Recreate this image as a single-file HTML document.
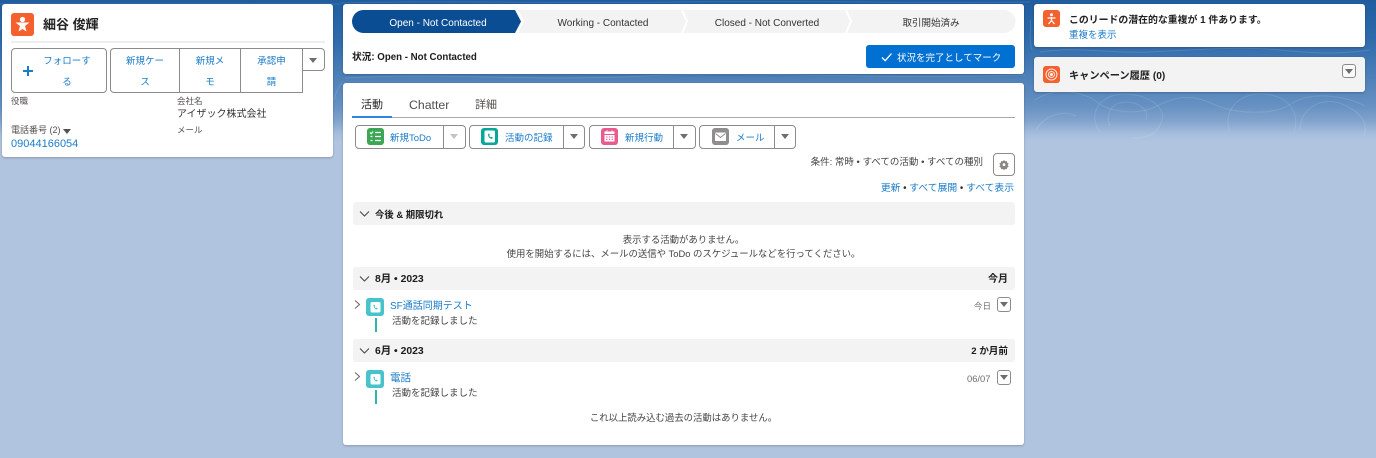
<!DOCTYPE html>
<html lang="ja"><head><meta charset="utf-8"><style>
html,body{margin:0;padding:0}
body{width:1376px;height:458px;overflow:hidden;position:relative;background:#b0c4df;font-family:"Liberation Sans","Noto Sans CJK JP",sans-serif;color:#3e3e3c;font-size:10px}
.a{position:absolute;white-space:nowrap}
.card{position:absolute;background:#fff;border-radius:3px;box-shadow:0 1px 2px rgba(0,0,0,.22)}
.l{color:#1b7cc9}
.btn{position:absolute;box-sizing:border-box;border:1px solid #8d8b89;background:#fff}
.t{position:absolute;text-align:center;line-height:22px;color:#1b7cc9;font-size:9.5px}
.tri{position:absolute;width:0;height:0;border-left:4.5px solid transparent;border-right:4.5px solid transparent;border-top:5.5px solid #706e6b}
.sec{position:absolute;left:353px;width:662px;background:#f3f3f3;border-radius:3px}
.sec b{position:absolute;left:22px;font-size:10px;color:#1c1c1c;white-space:nowrap;line-height:25px}
.ic{position:absolute;border-radius:3px}
svg{position:absolute;overflow:visible}
</style></head><body>
<div class="a" style="left:0;top:0;width:1376px;height:142px;background:linear-gradient(#1f5d9e 0,#2f6bab 40px,#6590c2 105px,#7fa2cc 120px,#a6bedd 134px,#b0c4df 142px)"></div>
<svg style="left:0;top:0" width="1376" height="140" fill="none" stroke="#fff" stroke-opacity=".12" stroke-width="1">
<path d="M1035 100c20-14 50-8 62 2s40 14 60 4 34-12 56-2 60 12 78 0 50-10 74 2"/>
<path d="M1100 132c-14-20 2-38 24-38s42 12 38 26-14 18-30 18"/>
<path d="M1110 126c-6-14 4-24 16-24s24 8 20 18"/>
<path d="M1230 132c-8-20 8-40 34-38s36 20 30 38"/>
<path d="M1300 130c0-22 22-34 42-26s26 20 22 32"/>
<path d="M1036 130c10-16 28-20 40-14"/>
<path d="M1040 52c40-6 70 2 110 0s90-6 130-2 60 4 90 0"/>
<path d="M334 100c2-10 6-14 8-18"/><path d="M0 4c60 0 90 0 340 0"/><path d="M345 78c100-6 180 4 300-2s200 4 380-1"/>
<path d="M340 3c120-3 200 1 340-1s230 2 350 0"/><path d="M1030 20c2 10-2 18 2 30"/>
</svg>

<!-- left card -->
<div class="card" style="left:2px;top:4px;width:331px;height:153px"></div>
<div class="ic" style="left:11px;top:13px;width:23px;height:23px;background:#f4612e;border-radius:3px"></div>
<svg style="left:11px;top:13px" width="23" height="23"><circle cx="11.5" cy="6.500" r="2.600" fill="#fff"/><path d="M4.500 9.500h14l-4.500 3.500 1.500 5.500-4-2.500-4 2.500 1.500-5.500z" fill="#fff"/></svg>
<div class="a" style="left:43px;top:15px;font-size:13px;line-height:20px;font-weight:bold;color:#222">細谷 俊輝</div>
<div class="a" style="left:11px;top:41px;width:314px;height:2px;background:#eeeeee"></div>
<div class="btn" style="left:11px;top:48px;width:96px;height:45px;border-radius:4px"></div>
<div class="a" style="left:23px;top:70px;width:10px;height:1.5px;background:#1b7cc9"></div>
<div class="a" style="left:27.3px;top:66px;width:1.5px;height:10px;background:#1b7cc9"></div>
<div class="t" style="left:38px;top:51px;width:58px">フォローす</div>
<div class="t" style="left:38px;top:72px;width:58px">る</div>
<div class="btn" style="left:110px;top:48px;width:193px;height:45px;border-radius:4px 0 0 4px"></div>
<div class="a" style="left:179px;top:48px;width:1px;height:45px;background:#8d8b89"></div>
<div class="a" style="left:240px;top:48px;width:1px;height:45px;background:#8d8b89"></div>
<div class="t" style="left:111px;top:51px;width:68px">新規ケー</div><div class="t" style="left:111px;top:72px;width:68px">ス</div>
<div class="t" style="left:180px;top:51px;width:60px">新規メ</div><div class="t" style="left:180px;top:72px;width:60px">モ</div>
<div class="t" style="left:241px;top:51px;width:61px">承認申</div><div class="t" style="left:241px;top:72px;width:61px">請</div>
<div class="btn" style="left:302px;top:48px;width:23px;height:23px;border-radius:0 4px 4px 0"></div><div class="tri" style="left:309px;top:58px"></div>
<div class="a" style="left:11px;top:95px;font-size:8.5px;line-height:13px;color:#54514f">役職</div>
<div class="a" style="left:177px;top:95px;font-size:8.5px;line-height:13px;color:#54514f">会社名</div>
<div class="a" style="left:177px;top:108px;font-size:10px;line-height:14px;color:#333">アイザック株式会社</div>
<div class="a" style="left:11px;top:124px;font-size:9px;line-height:13px;color:#54514f">電話番号 (2)</div><div class="tri" style="left:63px;top:129px;border-top-color:#54514f"></div>
<div class="a" style="left:177px;top:124px;font-size:8.5px;line-height:13px;color:#54514f">メール</div>
<div class="a l" style="left:11px;top:137px;font-size:11px;line-height:14px">09044166054</div>

<!-- path card -->
<div class="card" style="left:343px;top:4px;width:681px;height:70px"></div>
<svg style="left:352px;top:10px" width="663" height="23">
<path d="M11.5 0H652a11.5 11.5 0 0 1 0 23H11.5z" fill="#f3f3f3"/>
<path d="M11.5 0H163l6 11.5-6 11.5H11.5a11.5 11.5 0 0 1 0-23z" fill="#0b4d93"/>
<path d="M165 0l6 11.5-6 11.5M330 0l5 11.5-5 11.5M494 0l5 11.5-5 11.5" fill="none" stroke="#fff" stroke-width="2"/>
</svg>
<div class="a" style="left:352px;top:12px;width:172px;text-align:center;line-height:24px;color:#fff;font-size:10px">Open - Not Contacted</div>
<div class="a" style="left:517px;top:12px;width:172px;text-align:center;line-height:24px;color:#333;font-size:10px">Working - Contacted</div>
<div class="a" style="left:683px;top:12px;width:168px;text-align:center;line-height:24px;color:#333;font-size:10px">Closed - Not Converted</div>
<div class="a" style="left:847px;top:12px;width:168px;text-align:center;line-height:24px;color:#333;font-size:9.5px">取引開始済み</div>
<div class="a" style="left:352px;top:51px;line-height:14px;font-weight:bold;color:#1c1c1c;font-size:9.7px">状況: Open - Not Contacted</div>
<div class="a" style="left:866px;top:45px;width:149px;height:23px;background:#0070d2;border-radius:3px"></div>
<svg style="left:881px;top:51px" width="12" height="12"><path d="M1 6.500l3.200 3.200L10.500 2.500" fill="none" stroke="#fff" stroke-width="1.300"/></svg>
<div class="a" style="left:897px;top:47px;line-height:23px;color:#fff;font-size:9.5px">状況を完了としてマーク</div>

<!-- main card -->
<div class="card" style="left:343px;top:83px;width:681px;height:362px"></div>
<div class="a" style="left:361px;top:97px;font-size:11px;line-height:16px;color:#222">活動</div>
<div class="a" style="left:409px;top:97px;font-size:12.3px;line-height:16px;color:#514f4d">Chatter</div>
<div class="a" style="left:475px;top:97px;font-size:11px;line-height:16px;color:#514f4d">詳細</div>
<div class="a" style="left:352px;top:117px;width:663px;height:1px;background:#aaa9a7"></div>
<div class="a" style="left:352px;top:116px;width:40px;height:2px;background:#2e86de"></div>

<div class="btn" style="left:355px;top:125px;width:111px;height:24px;border-radius:4px"></div><div class="a" style="left:443px;top:125px;width:1px;height:24px;background:#8d8b89"></div>
<div class="btn" style="left:469px;top:125px;width:116px;height:24px;border-radius:4px"></div><div class="a" style="left:563px;top:125px;width:1px;height:24px;background:#8d8b89"></div>
<div class="btn" style="left:589px;top:125px;width:107px;height:24px;border-radius:4px"></div><div class="a" style="left:673px;top:125px;width:1px;height:24px;background:#8d8b89"></div>
<div class="btn" style="left:699px;top:125px;width:97px;height:24px;border-radius:4px"></div><div class="a" style="left:774px;top:125px;width:1px;height:24px;background:#8d8b89"></div>
<div class="tri" style="left:450px;top:134px;border-top-color:#c4c3c1"></div><div class="tri" style="left:570px;top:134px"></div><div class="tri" style="left:680px;top:134px"></div><div class="tri" style="left:781px;top:134px"></div>
<div class="ic" style="left:367px;top:128px;width:17px;height:17px;background:#3ba755"></div>
<svg style="left:367px;top:128px" width="17" height="17" fill="none" stroke="#fff" stroke-width="1.200"><path d="M3 4.500l1.200 1.200L6 3.500M8 4.500h6M8 8.500h6M8 12.500h6M3.500 8.500h2M3.500 12.500h2"/></svg>
<div class="a l" style="left:390px;top:127px;line-height:23px;font-size:9.5px">新規ToDo</div>
<div class="ic" style="left:481px;top:128px;width:17px;height:17px;background:#05a798"></div>
<svg style="left:481px;top:128px" width="17" height="17"><rect x="3.500" y="2.500" width="10.500" height="12" rx="1.500" fill="#fff"/><path d="M7 6c0 3 1.500 4.500 4 5l.8-1.500-1.600-.8-.6.600c-.8-.4-1.200-1-1.400-1.800l.6-.6L8 5.500z" fill="#05a798"/></svg>
<div class="a l" style="left:505px;top:127px;line-height:23px;font-size:9.5px">活動の記録</div>
<div class="ic" style="left:601px;top:128px;width:17px;height:17px;background:#eb5a8c"></div>
<svg style="left:601px;top:128px" width="17" height="17" fill="#fff"><rect x="3.500" y="3.500" width="10" height="2.500"/><path d="M5.500 2.500h1v2h-1zM10.500 2.500h1v2h-1z"/><path d="M3.500 7h10v6.500h-10zM5 8.500v1h1.500v-1zM7.800 8.500v1h1.500v-1zM10.500 8.500v1H12v-1zM5 10.800v1h1.500v-1zM7.800 10.800v1h1.500v-1zM10.500 10.800v1H12v-1z" fill-rule="evenodd"/></svg>
<div class="a l" style="left:625px;top:127px;line-height:23px;font-size:9.5px">新規行動</div>
<div class="ic" style="left:712px;top:128px;width:17px;height:17px;background:#8f8e8c"></div>
<svg style="left:712px;top:128px" width="17" height="17"><rect x="3" y="4.500" width="11" height="8.500" rx=".8" fill="#fff"/><path d="M3.500 5.500l5 4 5-4" fill="none" stroke="#8f8e8c"/></svg>
<div class="a l" style="left:736px;top:127px;line-height:23px;font-size:9.5px">メール</div>

<div class="a" style="right:393px;top:156px;line-height:14px;font-size:9.5px;color:#444">条件: 常時 • すべての活動 • すべての種別</div>
<div class="btn" style="left:993px;top:153px;width:22px;height:23px;border-radius:4px"></div>
<svg style="left:999px;top:159px" width="10" height="11"><path d="M5 .8l1 1.500 1.800-.3.400 1.700 1.500 1-1 1.400 1 1.500-1.500 1-.4 1.600-1.800-.2-1 1.400-1-1.400-1.800.2-.4-1.600-1.500-1 1-1.500-1-1.400 1.500-1 .4-1.700 1.800.3z" fill="#8a8886"/><circle cx="5" cy="5.600" r="1.400" fill="#fff"/></svg>
<div class="a" style="right:362px;top:182px;line-height:14px;font-size:9.8px;color:#333"><span class="l">更新</span> • <span class="l">すべて展開</span> • <span class="l">すべて表示</span></div>

<div class="sec" style="top:202px;height:23px"><b style="font-size:9.4px">今後 &amp; 期限切れ</b></div>
<div class="a" style="left:343px;width:681px;top:233px;text-align:center;line-height:14px;font-size:9.4px;color:#444">表示する活動がありません。<br>使用を開始するには、メールの送信や ToDo のスケジュールなどを行ってください。</div>
<div class="sec" style="top:267px;height:23px"><b style="font-size:10.4px">8月 • 2023</b><b style="left:auto;right:7px">今月</b></div>
<div class="sec" style="top:339px;height:23px"><b style="font-size:10.4px">6月 • 2023</b><b style="left:auto;right:7px;font-size:9.6px">2 か月前</b></div>
<svg style="left:360px;top:210px" width="10" height="8" fill="none" stroke="#444" stroke-width="1"><path d="M0 1.500l4.500 4.500L9 1.500"/></svg>
<svg style="left:360px;top:275px" width="10" height="8" fill="none" stroke="#444" stroke-width="1"><path d="M0 1.500l4.500 4.500L9 1.500"/></svg>
<svg style="left:360px;top:347px" width="10" height="8" fill="none" stroke="#444" stroke-width="1"><path d="M0 1.500l4.500 4.500L9 1.500"/></svg>

<svg style="left:354px;top:300px" width="8" height="10" fill="none" stroke="#666" stroke-width="1"><path d="M1 .5l4.500 4-4.500 4"/></svg>
<div class="ic" style="left:366px;top:298px;width:18px;height:18px;background:#48c3cc"></div>
<svg style="left:366px;top:298px" width="18" height="18"><rect x="4.500" y="4" width="10" height="10.500" rx="1.500" fill="#fff"/><path d="M7.500 7c0 2.500 1.300 4 3.500 4.500l.7-1.300-1.400-.7-.5.500c-.7-.3-1-.9-1.200-1.600l.5-.5-.7-1.400z" fill="#48c3cc"/></svg>
<div class="a" style="left:374.500px;top:318px;width:2px;height:14px;background:#2fb5b0"></div>
<div class="a l" style="left:390px;top:300px;line-height:14px;font-size:10px">SF通話同期テスト</div>
<div class="a" style="left:392px;top:315px;line-height:14px;font-size:9.500px;color:#444">活動を記録しました</div>
<div class="a" style="left:974px;top:299px;line-height:14px;font-size:8.500px;color:#706e6b">今日</div>
<div class="btn" style="left:997px;top:297px;width:14px;height:15px;border-radius:3px"></div><div class="tri" style="left:999.500px;top:302px"></div>

<svg style="left:354px;top:372px" width="8" height="10" fill="none" stroke="#666" stroke-width="1"><path d="M1 .5l4.500 4-4.500 4"/></svg>
<div class="ic" style="left:366px;top:370px;width:18px;height:18px;background:#48c3cc"></div>
<svg style="left:366px;top:370px" width="18" height="18"><rect x="4.500" y="4" width="10" height="10.500" rx="1.500" fill="#fff"/><path d="M7.500 7c0 2.500 1.300 4 3.500 4.500l.7-1.300-1.400-.7-.5.500c-.7-.3-1-.9-1.200-1.600l.5-.5-.7-1.400z" fill="#48c3cc"/></svg>
<div class="a" style="left:374.500px;top:390px;width:2px;height:14px;background:#2fb5b0"></div>
<div class="a l" style="left:390px;top:371px;line-height:14px;font-size:10.500px">電話</div>
<div class="a" style="left:392px;top:387px;line-height:14px;font-size:9.500px;color:#444">活動を記録しました</div>
<div class="a" style="left:967px;top:372px;line-height:14px;font-size:9.400px;color:#706e6b">06/07</div>
<div class="btn" style="left:997px;top:370px;width:14px;height:15px;border-radius:3px"></div><div class="tri" style="left:999.500px;top:375px"></div>
<div class="a" style="left:343px;width:681px;top:411px;text-align:center;line-height:14px;font-size:9.400px;color:#444">これ以上読み込む過去の活動はありません。</div>

<!-- right -->
<div class="card" style="left:1034px;top:4px;width:331px;height:43px"></div>
<div class="ic" style="left:1043px;top:10px;width:17px;height:17px;background:#f4612e"></div>
<svg style="left:1043px;top:10px" width="17" height="17" fill="none" stroke="#fff" stroke-width="1.300"><circle cx="8.500" cy="4.800" r="1.500" fill="#fff" stroke="none"/><path d="M4.500 8h8M8.500 7v3.500M8.500 10.500l-3 3.500M8.500 10.500l3 3.500"/></svg>
<div class="a" style="left:1069px;top:13px;line-height:15px;font-size:9.9px;font-weight:bold;color:#222">このリードの潜在的な重複が 1 件あります。</div>
<div class="a l" style="left:1069px;top:29px;line-height:14px;font-size:9.500px">重複を表示</div>
<div class="card" style="left:1034px;top:57px;width:331px;height:35px;background:#f3f3f3"></div>
<div class="ic" style="left:1043px;top:66px;width:17px;height:17px;background:#f4612e"></div>
<svg style="left:1043px;top:66px" width="17" height="17" fill="none" stroke="#fff" stroke-opacity=".85" stroke-width="1"><circle cx="8.500" cy="8.500" r="5.500"/><circle cx="8.500" cy="8.500" r="3"/><circle cx="8.500" cy="8.500" r="1" fill="#fff"/></svg>
<div class="a" style="left:1069px;top:69px;line-height:15px;font-size:10.200px;font-weight:bold;color:#222">キャンペーン履歴 (0)</div>
<div class="btn" style="left:1342px;top:64px;width:14px;height:14px;border-radius:3px;background:#fafafa"></div><div class="tri" style="left:1344.500px;top:69px"></div>
</body></html>
